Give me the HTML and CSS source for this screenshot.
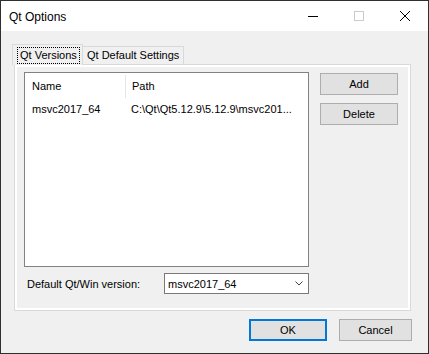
FILE: index.html
```html
<!DOCTYPE html>
<html lang="en">
<head>
    <meta charset="UTF-8">
    <title>Qt Options</title>
    <link rel="stylesheet" href="styles.css">
</head>
<body>
    <div class="window">
        <div class="titlebar">
            <span class="title">Qt Options</span>
            <div class="caption-buttons">
                <span class="caption-btn">
                    <svg width="10" height="10" viewBox="0 0 10 10"><line x1="0" y1="5.5" x2="10" y2="5.5" stroke="#000" stroke-width="1"/></svg>
                </span>
                <span class="caption-btn">
                    <svg width="10" height="10" viewBox="0 0 10 10"><rect x="0.5" y="0.5" width="9" height="9" fill="none" stroke="#ccc" stroke-width="1"/></svg>
                </span>
                <span class="caption-btn">
                    <svg width="10" height="10" viewBox="0 0 10 10"><path d="M0 0 L10 10 M10 0 L0 10" stroke="#000" stroke-width="1"/></svg>
                </span>
            </div>
        </div>

        <div class="dialog-body">
            <div class="tab-bar">
                <div class="tab tab-active"><span class="focus-rect">Qt Versions</span></div>
                <div class="tab">Qt Default Settings</div>
            </div>

            <div class="tab-pane">
                <div class="versions-row">
                    <div class="list-view">
                        <div class="list-header">
                            <div class="col col-name">Name</div>
                            <div class="col col-path">Path</div>
                        </div>
                        <div class="list-row">
                            <div class="col col-name">msvc2017_64</div>
                            <div class="col col-path">C:\Qt\Qt5.12.9\5.12.9\msvc201...</div>
                        </div>
                    </div>
                    <div class="side-buttons">
                        <button class="win-button">Add</button>
                        <button class="win-button">Delete</button>
                    </div>
                </div>

                <div class="default-row">
                    <label class="default-label">Default Qt/Win version:</label>
                    <div class="combo">
                        <span>msvc2017_64</span>
                        <svg width="8" height="5" viewBox="0 0 8 5"><polyline points="0.5,0.5 4,4 7.5,0.5" fill="none" stroke="#444" stroke-width="1"/></svg>
                    </div>
                </div>
            </div>

            <div class="footer">
                <button class="win-button default-button">OK</button>
                <button class="win-button cancel-button">Cancel</button>
            </div>
        </div>
    </div>
</body>
</html>
```

FILE: styles.css
```css
html, body {
    margin: 0;
    padding: 0;
}

body {
    font-family: "Liberation Sans", Arial, sans-serif;
    font-size: 11px;
    color: #000;
    background-color: #f0f0f0;
}

.window {
    width: 429px;
    height: 354px;
    box-sizing: border-box;
    border: 1px solid #2f2f2f;
    background-color: #f0f0f0;
    display: flex;
    flex-direction: column;
}

.titlebar {
    height: 30px;
    background-color: #fff;
    display: flex;
    align-items: center;
    justify-content: space-between;
}

.title {
    font-size: 12px;
    padding-left: 8px;
    padding-top: 1px;
}

.caption-buttons {
    display: flex;
    height: 30px;
}

.caption-btn {
    width: 46px;
    display: flex;
    align-items: center;
    justify-content: center;
}

.dialog-body {
    padding: 13px 16px 0 13px;
}

.tab-bar {
    display: flex;
    align-items: flex-end;
    margin-left: -2px;
    height: 20px;
    position: relative;
    z-index: 1;
}

.tab {
    height: 18px;
    box-sizing: border-box;
    border: 1px solid #d9d9d9;
    border-bottom: none;
    border-left: none;
    background-color: #f0f0f0;
    padding: 0 4px;
    display: flex;
    align-items: center;
    line-height: 13px;
}

.tab-active {
    height: 21px;
    margin-bottom: -1px;
    border-left: 1px solid #d9d9d9;
    border-right: 1px solid #d9d9d9;
    background-color: #f0f0f0;
    padding: 0 1px 0 4px;
    width: 71px;
}

.focus-rect {
    border: 1px dotted #000;
    padding: 1px 2px 1px 2px;
}

.tab-pane {
    width: 397px;
    height: 247px;
    box-sizing: border-box;
    border: 1px solid #d9d9d9;
    box-shadow: inset 0 0 0 2px #fff;
    padding: 7px 9px 0 9px;
}

.versions-row {
    display: flex;
}

.list-view {
    width: 285px;
    height: 195px;
    box-sizing: border-box;
    border: 1px solid #828282;
    background-color: #fff;
}

.list-header,
.list-row {
    display: flex;
    white-space: nowrap;
}

.list-header {
    height: 25px;
    align-items: center;
}

.list-header .col-name {
    border-right: 1px solid #e5e5e5;
    height: 23px;
    line-height: 23px;
    margin-top: 2px;
}

.list-row {
    height: 21px;
    align-items: center;
}

.col-name {
    width: 93px;
    padding-left: 7px;
}

.col-path {
    padding-left: 6px;
}

.side-buttons {
    display: flex;
    flex-direction: column;
    gap: 8px;
    margin-left: 11px;
    margin-top: 1px;
}

.win-button {
    font-family: inherit;
    font-size: 11px;
    color: #000;
    width: 78px;
    height: 22px;
    box-sizing: border-box;
    background-color: #e1e1e1;
    border: 1px solid #adadad;
    padding: 0;
}

.default-row {
    display: flex;
    align-items: center;
    margin-top: 6px;
}

.default-label {
    width: 137px;
    padding-left: 3px;
}

.combo {
    width: 145px;
    height: 21px;
    box-sizing: border-box;
    border: 1px solid #7a7a7a;
    background-color: #fff;
    display: flex;
    align-items: center;
    justify-content: space-between;
    padding: 0 5px 0 3px;
}

.footer {
    display: flex;
    justify-content: flex-end;
    gap: 12px;
    margin-top: 8px;
}

.default-button {
    width: 78px;
    border: 2px solid #0078d7;
}

.cancel-button {
    width: 73px;
}
```
